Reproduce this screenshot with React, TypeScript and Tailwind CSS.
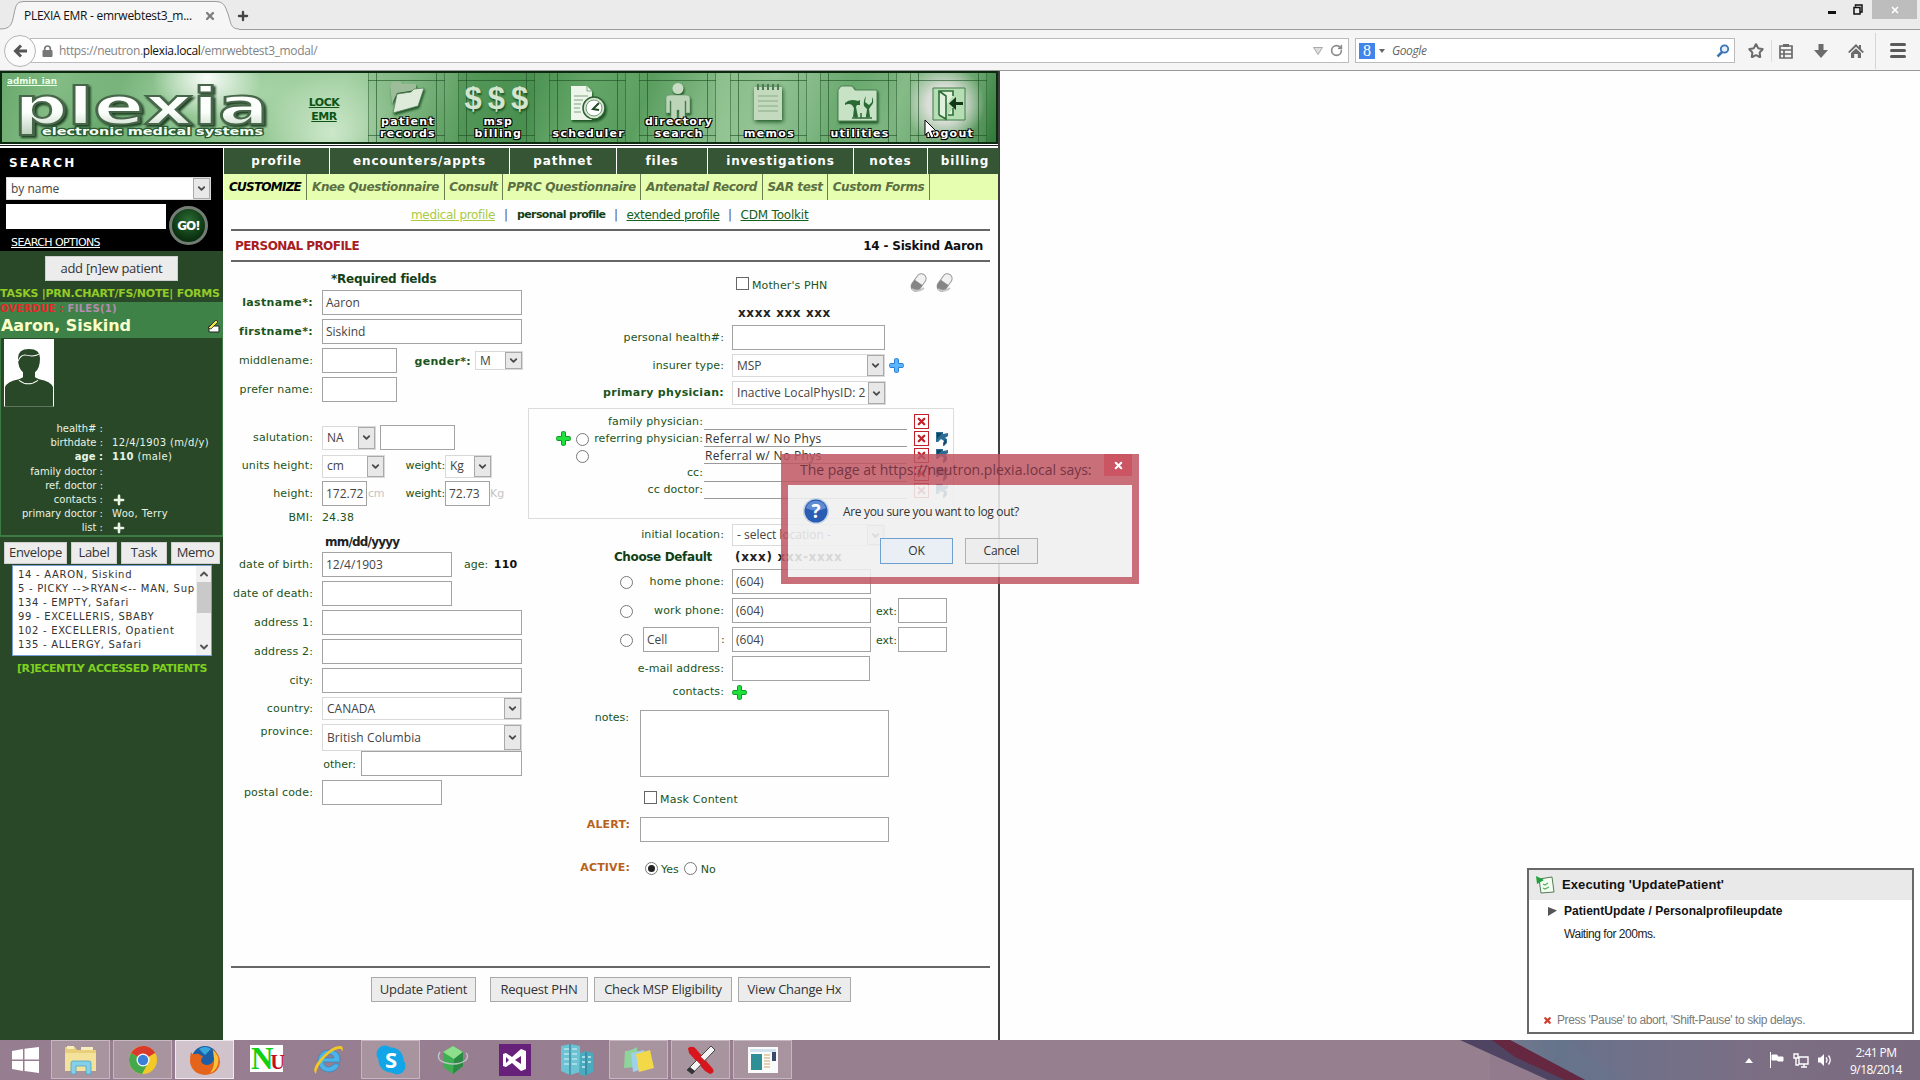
import React from 'react';
import { ChevronDown, ChevronUp, RotateCw, Star, Plus, X } from 'lucide-react';

type P = { className?: string; children?: React.ReactNode };

/* ---------- form primitives ---------- */

const Input = ({ className = '', children }: P) => (
  <div className={`flex h-[25px] shrink-0 items-center border border-[#a3a3a3] bg-white pl-[3px] font-['Open_Sans',sans-serif] text-[12px] text-[#444] ${className}`}>
    {children}
  </div>
);

const Select = ({ className = '', children }: P) => (
  <div className={`flex shrink-0 items-stretch border border-[#d9d9d9] bg-white font-['Open_Sans',sans-serif] text-[12px] text-[#444] ${className}`}>
    <span className="flex min-w-0 flex-1 items-center overflow-hidden whitespace-nowrap pl-1">{children}</span>
    <span className="flex w-[17px] shrink-0 items-center justify-center border border-[#a9a9a9] bg-[#e8e8e8]">
      <ChevronDown size={11} strokeWidth={4} className="text-[#4a4a4a]" />
    </span>
  </div>
);

const Label = ({ className = '', children }: P) => (
  <div className={`shrink-0 whitespace-nowrap text-right text-[11px] leading-4 text-[#1a5420] ${className}`}>{children}</div>
);

const Radio = ({ on = false }: { on?: boolean }) => (
  <span className="flex size-[13px] shrink-0 items-center justify-center rounded-full border border-[#777] bg-white">
    {on && <span className="size-[7px] rounded-full bg-[#222]" />}
  </span>
);

const Cross = ({ fill, stroke }: { fill: string; stroke: string }) => (
  <svg width="15" height="15" viewBox="0 0 15 15" className="shrink-0">
    <path d="M5.500 1.500q0-.8.800-.8h2.400q.8 0 .8.800v4h4q.8 0 .8.800v2.400q0 .8-.8.800h-4v4q0 .8-.8.800H6.300q-.8 0-.8-.8v-4h-4q-.8 0-.8-.8V6.300q0-.8.800-.8h4z" fill={fill} stroke={stroke} strokeWidth="1" />
  </svg>
);

const RedX = () => (
  <span className="flex size-[15px] shrink-0 items-center justify-center border border-[#c4202a] bg-white">
    <X size={11} strokeWidth={5} className="text-[#c4202a]" />
  </span>
);

const BlueArrow = () => (
  <svg width="14" height="15" viewBox="0 0 14 15" className="shrink-0">
    <path d="M1 1h7v2l5-1v3l-3 2 2 1v4l-3 3H8v-3l1-2-3-2-3 3H1z" fill="#2c6d94" />
    <path d="M2 2h5L2 8z" fill="#16435f" />
    <path d="M10 9q1 2-1 4" fill="none" stroke="#16435f" strokeWidth="1.500" />
  </svg>
);

/* ---------- browser chrome ---------- */

const BrowserTabs = () => (
  <div className="relative flex h-[30px] items-start border-b border-[#9a9a9a] bg-[#ebebeb]">
    <svg width="240" height="30" viewBox="0 0 240 30" className="absolute left-0 top-0">
      <path d="M0 29C11 29 12 24 14 14S17 2 25 2H215C224 2 225 6 228 14S230 29 239 29V30H0Z" fill="#f6f6f6" />
      <path d="M0 29C11 29 12 24 14 14S17 1.500 25 1.500H215C224 1.500 225 6 228 14S230 29 239 29" fill="none" stroke="#9c9c9c" />
    </svg>
    <div className="relative flex w-full items-start font-['Open_Sans',sans-serif] text-[12px]">
      <span className="ml-6 mt-[7px] w-[178px] leading-[18px] tracking-[-0.28px] text-[#111]">PLEXIA EMR - emrwebtest3_m...</span>
      <X size={12} strokeWidth={4.500} className="mt-[10px] ml-[2px] text-[#7d7d7d]" />
      <Plus size={14} strokeWidth={4} className="ml-[20px] mt-[9px] text-[#444]" />
      <div className="ml-auto flex items-start">
        <span className="mr-[17px] mt-[11px] h-[3px] w-[8px] bg-[#111]" />
        <svg width="10" height="11" viewBox="0 0 10 11" className="mr-[9px] mt-[4px]">
          <path d="M2.500 2.500V1H9v7H7.500M1 3.500h6V10H1z" fill="none" stroke="#111" strokeWidth="1.500" />
        </svg>
        <span className="mr-[3px] flex h-[19px] w-[45px] items-center justify-center bg-[#bdbdbd]">
          <X size={10} strokeWidth={4} className="text-white" />
        </span>
      </div>
    </div>
  </div>
);

const NavBar = () => (
  <div className="flex h-[41px] items-center border-b border-[#9a9a9a] bg-[#f5f5f5] pt-px font-['Open_Sans',sans-serif] text-[12px]">
    <span className="z-10 ml-1 flex size-[32px] shrink-0 items-center justify-center rounded-full border border-[#b5b5b5] bg-[#fbfbfb]">
      <svg width="15" height="14" viewBox="0 0 15 14">
        <path d="M8 1.500L2.500 7 8 12.500M3 7h11" fill="none" stroke="#555" strokeWidth="3" />
      </svg>
    </span>
    <div className="-ml-[6px] flex h-[25px] w-[1319px] items-center border border-[#bcbcbc] bg-white">
      <svg width="11" height="12" viewBox="0 0 11 12" className="ml-[11px]">
        <path d="M2.700 5.500V3.800a2.800 2.800 0 015.600 0v1.700" fill="none" stroke="#777" strokeWidth="1.700" />
        <rect x="0.500" y="5" width="10" height="7" rx="1" fill="#777" />
      </svg>
      <span className="ml-[6px] whitespace-nowrap pt-px tracking-[-0.35px] text-[#838383]">
        https://neutron.<span className="text-[#111]">plexia.local</span>/emrwebtest3_modal/
      </span>
      <svg width="10" height="8" viewBox="0 0 10 8" className="ml-auto"><path d="M.5.500h9L5 7.500z" fill="#ddd" stroke="#aaa" /></svg>
      <RotateCw size={13} strokeWidth={3} className="ml-[7px] mr-[5px] text-[#8a8a8a]" />
    </div>
    <div className="ml-[6px] flex h-[25px] w-[380px] items-center border border-[#bcbcbc] bg-white">
      <span className="ml-[3px] flex size-4 items-center justify-center bg-[#4285ea] font-['Liberation_Serif',serif] text-[16px] leading-none text-white">8</span>
      <svg width="6" height="4" viewBox="0 0 6 4" className="ml-[4px]"><path d="M0 0h6L3 4z" fill="#666" /></svg>
      <span className="ml-[7px] pt-px italic tracking-[-0.4px] text-[#666]">Google</span>
      <svg width="14" height="14" viewBox="0 0 14 14" className="ml-auto mr-1">
        <circle cx="8.500" cy="5" r="3.700" fill="#e4f0fa" stroke="#3a75b5" strokeWidth="1.800" />
        <path d="M6 8L1.500 12.500" stroke="#3a75b5" strokeWidth="2.500" />
      </svg>
    </div>
    <Star size={16} strokeWidth={3} className="ml-[13px] text-[#6b6b6b]" />
    <span className="ml-[7px] h-[22px] w-px bg-[#ddd]" />
    <svg width="14" height="16" viewBox="0 0 14 16" className="ml-[7px]">
      <path d="M1 3h12v12H1zM1 7h12M1 11h12M5 7v8" fill="none" stroke="#6b6b6b" strokeWidth="1.700" />
      <path d="M4 1h6v3H4z" fill="#6b6b6b" />
    </svg>
    <svg width="14" height="14" viewBox="0 0 14 14" className="ml-[21px]"><path d="M4.500 0h5v6H14l-7 8-7-8h4.500z" fill="#6b6b6b" /></svg>
    <svg width="16" height="14" viewBox="0 0 16 14" className="ml-[20px]">
      <path d="M8 0l3 3V1h2v4l3 3-1.500 1L8 2.800 1.500 9 0 8z" fill="#6b6b6b" />
      <path d="M3 9l5-4.500L13 9v5H9.800v-4H6.200v4H3z" fill="#6b6b6b" />
    </svg>
    <span className="ml-[11px] h-[36px] w-px bg-[#d5d5d5]" />
    <div className="ml-[14px] flex w-[16px] flex-col gap-[3px]">
      <span className="h-[3px] rounded-sm bg-[#5a5a5a]" /><span className="h-[3px] rounded-sm bg-[#5a5a5a]" /><span className="h-[3px] rounded-sm bg-[#5a5a5a]" />
    </div>
  </div>
);

/* ---------- application header ---------- */

const icons = {
  folder: (
    <svg width="42" height="36" viewBox="0 0 42 36" className="mt-[-3px] drop-shadow-[1px_2px_1px_#1d5524]">
      <path d="M4 6l2-4 8-1 3 3h13v6L11 13 6 24z" fill="#9cbc9a" />
      <path d="M11 14l14-2 3-3 10-1-6 18-25 7z" fill="#dfebda" stroke="#55805a" strokeWidth=".8" />
    </svg>
  ),
  dollars: (
    <div className="ml-[5px] whitespace-nowrap font-['Liberation_Sans',sans-serif] text-[31px] font-bold leading-[32px] tracking-[6px] text-[#d3e4cf] [text-shadow:1px_2px_2px_#1d5524]">$$$</div>
  ),
  clock: (
    <svg width="40" height="38" viewBox="0 0 40 38" className="mt-[2px] drop-shadow-[1px_2px_1px_#1d5524]">
      <path d="M4 1h16l5 5v29H4z" fill="#eef5ea" />
      <path d="M20 1v5h5M7 11h14M7 15h9M7 19h7M7 23h6M7 27h7" stroke="#7da381" fill="none" />
      <circle cx="27" cy="23" r="11" fill="#dce9d8" stroke="#2c6032" strokeWidth="1.500" />
      <circle cx="27" cy="23" r="8" fill="#fff" stroke="#6f9a72" />
      <path d="M32 18l-6 6 6 1" fill="none" stroke="#1d4a22" strokeWidth="2" />
    </svg>
  ),
  person: (
    <svg width="34" height="40" viewBox="0 0 34 40" className="drop-shadow-[1px_2px_1px_#1d5524]">
      <circle cx="17" cy="5.500" r="5.500" fill="#c8dcc4" />
      <path d="M9 12h16q4 0 4 3v15h-4V18h-1v22h-6V27h-2v13h-6V18H9v12H5V15q0-3 4-3z" fill="#bcd5b9" stroke="#6c976f" strokeWidth=".6" />
    </svg>
  ),
  memo: (
    <svg width="34" height="38" viewBox="0 0 34 38" className="drop-shadow-[1px_2px_2px_#1d5524]">
      <path d="M3 4h28v33H3z" fill="#c4dabf" />
      <path d="M7 1v6M12 1v6M17 1v6M22 1v6M27 1v6" stroke="#4d7a52" strokeWidth="2" />
      <path d="M7 13h20M7 18h20M7 23h20M7 28h20" stroke="#86ab87" />
    </svg>
  ),
  tools: (
    <svg width="44" height="38" viewBox="0 0 44 38" className="mt-px drop-shadow-[1px_2px_1px_#1d5524]">
      <path d="M2 6l3-4h11l3 4h22v31H2z" fill="#c8e2c5" stroke="#4b8251" />
      <path d="M9 19q5-5 13-2l2-1v5h-3l-1 2 2 10h-5l1-9-2-3q-3-2-7 0zM30 12l-1 6 4 3 3-3v-5q3 5-1 9l-2 3 1 8h-4l1-8-3-3q-1-5 2-10z" fill="#2c6a35" />
      <path d="M16 34h20M20 30v4M25 29v5M31 30v4" stroke="#2c6a35" strokeWidth="1.500" />
    </svg>
  ),
  door: (
    <svg width="34" height="34" viewBox="0 0 34 34" className="mt-[4px]">
      <path d="M1 1h32v32H1z" fill="#b6deb4" stroke="#3f7a45" />
      <path d="M7 28V4h14v5M21 21v7h-5M7 4l7 5v23l-7-4" fill="#dff0dc" stroke="#2e6d36" strokeWidth="1.600" />
      <path d="M31 15h-7v-5l-7 6.500 7 6.500v-5h7z" fill="#14371a" />
    </svg>
  ),
};

const HeaderButton = ({ icon, lines, tint, shift = '' }: { icon: React.ReactNode; lines: string[]; tint: string; shift?: string }) => (
  <div className={`relative flex h-[69px] w-[77px] shrink-0 flex-col items-center ${tint}`}>
    <div className="absolute inset-x-0 top-[7px] bottom-[6px] border-y border-[#1c4d22]/60" />
    <div className="absolute inset-y-0 left-0 right-0 border-x border-[#1c4d22]/45" />
    <div className="absolute inset-y-0 left-[8px] right-[8px] border-x border-[#1c4d22]/60" />
    <div className={`relative mt-[10px] flex h-[34px] items-start justify-center ${shift}`}>{icon}</div>
    <div className="absolute bottom-[2px] left-[3px] right-0 flex flex-col items-center whitespace-nowrap text-[11px] font-bold leading-[12px] tracking-[1.3px] text-white [text-shadow:1px_1px_0_#000,-1px_1px_0_#000,1px_-1px_0_#000,-1px_-1px_0_#000,0_1px_1px_#000]">
      {lines.map((l) => <span key={l}>{l}</span>)}
    </div>
  </div>
);

const AppHeader = () => (
  <div className="flex h-[73px] w-full items-start border-2 border-[#0b2a10] bg-[radial-gradient(ellipse_55px_40px_at_205px_5px,rgba(255,255,255,.95),transparent),radial-gradient(ellipse_70px_60px_at_330px_60px,rgba(215,238,212,.8),transparent),radial-gradient(ellipse_200px_60px_at_250px_20px,rgba(170,214,170,.9),transparent),linear-gradient(110deg,#68a86c_0%,#82bb83_6%,#63a568_12%,#7db97f_18%,#8cc18c_26%,#9ccb9b_34%,#83b985_40%,#5b9d60_47%,#4f9555_53%,#6aab6e_58%,#5b9f60_64%,#8abf8a_70%,#9cc89c_76%,#6ead73_84%,#86bb88_89%,#5d9f63_96%,#2f7837_100%)]">
    <svg width="300" height="69" viewBox="0 0 300 69" className="shrink-0">
      <defs>
        <linearGradient id="logo" x1="0" y1="0" x2="0" y2="1">
          <stop offset="0" stopColor="#ffffff" />
          <stop offset=".6" stopColor="#fbfffb" />
          <stop offset="1" stopColor="#b9cdb9" />
        </linearGradient>
      </defs>
      <g fontFamily="DejaVu Sans" fontWeight="bold">
        <text x="12" y="51" fontSize="52" textLength="255" lengthAdjust="spacingAndGlyphs" fill="url(#logo)" stroke="#47664a" strokeWidth="2" className="drop-shadow-[2px_2px_1px_#1e4023]">plexia</text>
        <text x="40" y="62" fontSize="11" textLength="221" lengthAdjust="spacingAndGlyphs" fill="#f4fff4" stroke="#2b5a31" strokeWidth="2.500" paintOrder="stroke">electronic medical systems</text>
        <text x="5" y="11" fontSize="9.500" textLength="50" lengthAdjust="spacingAndGlyphs" fill="#eaffea" textDecoration="underline">admin_ian</text>
      </g>
    </svg>
    <div className="mt-[23px] ml-[2px] flex w-[40px] flex-col items-center text-[11px] font-bold leading-[14px] tracking-[-0.5px] text-[#0c5416] underline">
      <span>LOCK</span><span>EMR</span>
    </div>
    <div className="ml-[24px] flex gap-[13.4px]">
      <HeaderButton icon={icons.folder} lines={['patient', 'records']} tint="bg-[#5d9f62]/20" />
      <HeaderButton icon={icons.dollars} lines={['msp', 'billing']} tint="bg-[#3d8643]/30" />
      <HeaderButton icon={icons.clock} lines={['scheduler']} tint="bg-[#4b9151]/20" />
      <HeaderButton icon={icons.person} lines={['directory', 'search']} tint="bg-[#5a9c5f]/20" shift="mt-[7px]" />
      <HeaderButton icon={icons.memo} lines={['memos']} tint="bg-[#75ad78]/20" />
      <HeaderButton icon={icons.tools} lines={['utilities']} tint="bg-[#5b9c60]/20" />
      <HeaderButton icon={icons.door} lines={['logout']} tint="bg-[radial-gradient(circle_at_45%_45%,#dcdfd9_30%,rgba(160,195,160,.15)_70%)]" />
    </div>
  </div>
);

/* ---------- sidebar ---------- */

const info: [string, React.ReactNode, string?][] = [
  ['health# :', ''],
  ['birthdate :', '12/4/1903 (m/d/y)'],
  ['age :', <><b>110</b> (male)</>, 'font-bold'],
  ['family doctor :', ''],
  ['ref. doctor :', ''],
  ['contacts :', <Plus size={14} strokeWidth={4.500} />],
  ['primary doctor :', 'Woo, Terry'],
  ['list :', <Plus size={14} strokeWidth={4.500} />],
];

const patients = ['14 - AARON, Siskind', '5 - PICKY -->RYAN<-- MAN, Sup', '134 - EMPTY, Safari', '99 - EXCELLERIS, SBABY', '102 - EXCELLERIS, Opatient', '135 - ALLERGY, Safari'];

const SideButton = ({ className = '', children }: P) => (
  <span className={`flex items-center justify-center border border-[#cfcfcf] bg-[#ececec] font-['Open_Sans',sans-serif] text-[13px] tracking-[-0.28px] text-[#333] ${className}`}>{children}</span>
);

const Sidebar = () => (
  <div className="flex w-[223px] shrink-0 flex-col bg-[#284828]">
    <div className="flex h-[103px] flex-col bg-black px-[6px]">
      <span className="ml-[3px] mt-[7px] text-[12px] font-bold leading-4 tracking-[2.2px] text-white">SEARCH</span>
      <Select className="mt-[6px] h-[23px] w-[205px]">by name</Select>
      <div className="flex h-[34px] items-start">
        <div className="mt-[4px] h-[25px] w-[160px] bg-white" />
        <span className="ml-[3px] mt-[6px] flex size-[39px] shrink-0 items-center justify-center rounded-full border-[3px] border-[#747d74] bg-[radial-gradient(circle_at_50%_35%,#2b6b32,#0a3010_70%)] text-[12px] font-bold tracking-[-1px] text-white">GO!</span>
      </div>
      <span className="ml-[5px] mt-px text-[11px] leading-4 tracking-[-0.58px] text-white underline">SEARCH OPTIONS</span>
    </div>
    <SideButton className="ml-[45px] mt-[5px] h-[25px] w-[133px]">add [n]ew patient</SideButton>
    <div className="mt-[5px] h-4 whitespace-nowrap text-[11px] font-bold leading-4 tracking-[-0.26px] text-[#93cb27]">TASKS |PRN.CHART/FS/NOTE| FORMS</div>
    <div className="h-[36px] bg-[#3e8247]">
      <div className="h-[14px] whitespace-nowrap text-[10px] font-bold leading-[13px] tracking-[0.28px] text-[#e8262a]">OVERDUE : <span className="text-[#b58cb0]">FILES(1)</span></div>
      <div className="flex h-[20px] items-center justify-between pl-px pr-[3px] text-[16px] font-bold leading-5 tracking-[-0.05px] text-[#fbffc8]">
        Aaron, Siskind
        <svg width="13" height="14" viewBox="0 0 13 14">
          <path d="M2 7h10v6H2z" fill="#fff" stroke="#222" />
          <path d="M1 9L9 1l2 2-7 7z" fill="#f0e050" stroke="#222" strokeWidth=".8" />
        </svg>
      </div>
    </div>
    <div className="flex h-[199px] flex-col border-x border-b-2 border-[#3e7a43] pt-px">
      <svg width="50" height="68" viewBox="0 0 50 67" preserveAspectRatio="none" className="ml-[3px]">
        <path d="M0 0h50v67H0z" fill="#fff" />
        <path d="M1 67V48q2-6 14-8l4-2v-5q-5-4-5-14 0-9 11-9t11 9q0 10-5 14v5l4 2q12 2 14 8v19z" fill="#284828" />
        <path d="M14 22q3-7 8-6 8 2 13-1M15 41q9 7 19 0" fill="none" stroke="#fff" />
      </svg>
      <div className="mt-[15px] flex flex-col text-[10px] text-[#e8f4e4]">
        {info.map(([k, v, c], i) => (
          <div key={i} className="flex h-[14.200px] items-center">
            <span className={`w-[102px] whitespace-nowrap text-right ${c ?? ''}`}>{k}</span>
            <span className="ml-[9px] whitespace-nowrap tracking-[0.35px]">{v}</span>
          </div>
        ))}
      </div>
    </div>
    <div className="mt-[5px] flex h-[22px] gap-[4px] pl-[4px] pr-[3px]">
      <SideButton className="w-[63px]">Envelope</SideButton>
      <SideButton className="w-[46px]">Label</SideButton>
      <SideButton className="w-[46px]">Task</SideButton>
      <SideButton className="w-[49px]">Memo</SideButton>
    </div>
    <div className="ml-[12px] mt-px flex h-[91px] w-[200px] border border-[#7a9fd8] bg-white">
      <div className="flex min-w-0 flex-1 flex-col overflow-hidden whitespace-nowrap pl-[5px] pt-[2px] text-[10px] leading-[14px] tracking-[0.7px] text-[#333]">
        {patients.map((p) => <span key={p}>{p}</span>)}
      </div>
      <div className="flex w-[15px] flex-col items-center bg-[#f0f0f0]">
        <ChevronUp size={12} strokeWidth={4} className="my-[2px] text-[#555]" />
        <div className="h-[31px] w-[14px] bg-[#c9c9c9]" />
        <ChevronDown size={12} strokeWidth={4} className="mb-[2px] mt-auto text-[#555]" />
      </div>
    </div>
    <div className="ml-[17px] mt-[5px] whitespace-nowrap text-[11px] font-bold leading-4 tracking-[-0.42px] text-[#7fd01f]">[R]ECENTLY ACCESSED PATIENTS</div>
  </div>
);

/* ---------- navigation ---------- */

const tabs: [string, string][] = [
  ['profile', 'w-[105px]'], ['encounters/appts', 'w-[179px]'], ['pathnet', 'w-[106px]'], ['files', 'w-[90px]'],
  ['investigations', 'w-[145px]'], ['notes', 'w-[73px]'], ['billing', 'w-[71px] pl-[3px]'],
];
const custom: [string, string][] = [
  ['CUSTOMIZE', 'w-[83px] text-black tracking-[-0.76px]'],
  ['Knee Questionnaire', 'w-[138px] text-[#5c6f43] tracking-[-0.38px]'], ['Consult', 'w-[58px] text-[#5c6f43] tracking-[-0.38px]'], ['PPRC Questionnaire', 'w-[138px] text-[#5c6f43] tracking-[-0.38px]'],
  ['Antenatal Record', 'w-[122px] text-[#5c6f43] tracking-[-0.38px]'], ['SAR test', 'w-[65px] text-[#5c6f43] tracking-[-0.38px]'], ['Custom Forms', 'w-[102px] text-[#5c6f43] tracking-[-0.38px]'],
];

const Navigation = () => (
  <>
    <div className="flex h-[26px] gap-px bg-white">
      {tabs.map(([t, w]) => (
        <span key={t} className={`flex shrink-0 items-center justify-center bg-[#355535] text-[12px] font-bold tracking-[0.9px] text-white ${w}`}>{t}</span>
      ))}
    </div>
    <div className="flex h-[26px] bg-[#e5feb0]">
      {custom.map(([t, w]) => (
        <span key={t} className={`flex shrink-0 items-center justify-center whitespace-nowrap border-r border-[#6b7c50] text-[12px] font-bold italic ${w}`}>{t}</span>
      ))}
    </div>
    <div className="ml-[7px] flex h-[31px] w-[759px] items-center border-b-2 border-[#666] pl-[180px] text-[12px] text-[#14601c]">
      <span className="tracking-[-0.34px] text-[#a9cb42] underline">medical profile</span>
      <span className="mx-[9px] text-[#555]">|</span>
      <span className="pt-px text-[11px] font-bold tracking-[-0.62px] text-[#123f16]">personal profile</span>
      <span className="mx-[8.500px] text-[#555]">|</span>
      <span className="tracking-[-0.33px] underline">extended profile</span>
      <span className="mx-[8.500px] text-[#555]">|</span>
      <span className="tracking-[-0.2px] underline">CDM Toolkit</span>
    </div>
    <div className="ml-[7px] flex h-[31px] w-[759px] items-center justify-between border-b-2 border-[#666] pl-[4px] pr-[7px] text-[12px] font-bold">
      <span className="tracking-[-0.56px] text-[#a81d22]">PERSONAL PROFILE</span>
      <span className="tracking-[-0.2px] text-[#111]">14 - Siskind Aaron</span>
    </div>
  </>
);

/* ---------- patient form ---------- */

const L = ({ b = false, children }: { b?: boolean; children: React.ReactNode }) => (
  <Label className={b ? 'mr-[9px] w-[82px] font-bold tracking-[0.35px]' : 'mr-[9px] w-[82px] tracking-[0.15px]'}>{children}</Label>
);
const R = ({ b = false, children }: { b?: boolean; children: React.ReactNode }) => (
  <Label className={b ? 'mr-[8px] w-[196px] font-bold tracking-[0.3px]' : 'mr-[8px] w-[196px] tracking-[0.1px]'}>{children}</Label>
);

const LeftForm = () => (
  <div className="flex w-[297px] shrink-0 flex-col">
    <div className="ml-[100px] mt-[9px] h-[17px] text-[12px] font-bold leading-[17px] tracking-[-0.23px] text-[#123f16]">*Required fields</div>
    <div className="mt-[2px] flex items-center"><L b>lastname*:</L><Input className="w-[200px]">Aaron</Input></div>
    <div className="mt-[4px] flex items-center"><L b>firstname*:</L><Input className="w-[200px]">Siskind</Input></div>
    <div className="mt-[4px] flex items-center">
      <L>middlename:</L><Input className="w-[75px]" />
      <Label className="ml-[15px] mt-[2px] w-[59px] font-bold tracking-[0.3px]">gender*:</Label>
      <Select className="ml-[4px] h-[19px] w-[48px]">M</Select>
    </div>
    <div className="mt-[4px] flex items-center"><L>prefer name:</L><Input className="w-[75px]" /></div>
    <div className="mt-[23px] flex items-center"><L>salutation:</L><Select className="h-[24px] w-[54px]">NA</Select><Input className="ml-[4px] w-[75px]" /></div>
    <div className="mt-[4px] flex h-[24px] items-center">
      <L>units height:</L><Select className="h-[23px] w-[63px]">cm</Select>
      <Label className="ml-[18px] w-[42px] tracking-[-0.2px]">weight:</Label>
      <Select className="h-[23px] w-[47px]">Kg</Select>
    </div>
    <div className="mt-[3px] flex items-center">
      <L>height:</L><Input className="w-[45px] pr-0">172.72</Input>
      <Label className="w-[17px] text-left tracking-[-0.4px] text-[#c4c4c4]!">cm</Label>
      <Label className="ml-[19px] w-[42px] tracking-[-0.2px]">weight:</Label>
      <Input className="w-[45px] pl-[2px]">72.73</Input>
      <Label className="text-[#c4c4c4]!">Kg</Label>
    </div>
    <div className="mt-[4px] flex h-4 items-center"><L>BMI:</L><Label className="tracking-[0.1px]">24.38</Label></div>
    <div className="ml-[94px] mt-[8px] h-4 text-[12px] font-bold leading-4 tracking-[-0.8px] text-[#222]">mm/dd/yyyy</div>
    <div className="mt-[2px] flex items-center">
      <L>date of birth:</L><Input className="w-[130px]">12/4/1903</Input>
      <Label className="ml-[12px]">age: <b className="ml-[2px] tracking-[0.3px] text-[#111]">110</b></Label>
    </div>
    <div className="mt-[4px] flex items-center"><L>date of death:</L><Input className="w-[130px]" /></div>
    <div className="mt-[4px] flex items-center"><L>address 1:</L><Input className="w-[200px]" /></div>
    <div className="mt-[4px] flex items-center"><L>address 2:</L><Input className="w-[200px]" /></div>
    <div className="mt-[4px] flex items-center"><L>city:</L><Input className="w-[200px]" /></div>
    <div className="mt-[4px] flex items-center"><L>country:</L><Select className="h-[23px] w-[200px]">CANADA</Select></div>
    <div className="mt-[4px] flex items-start"><L>province:</L><Select className="h-[27px] w-[200px] tracking-[0.1px]">British Columbia</Select></div>
    <div className="ml-[91px] flex items-center"><Label className="mr-[5px] mt-[3px] w-[34px]">other:</Label><Input className="w-[161px]" /></div>
    <div className="mt-[4px] flex items-center"><L>postal code:</L><Input className="w-[120px]" /></div>
  </div>
);

const physicians: { label: string; value?: string; plus?: boolean; radio?: boolean; arrow?: boolean }[] = [
  { label: 'family physician:' },
  { label: 'referring physician:', value: 'Referral w/ No Phys', plus: true, radio: true, arrow: true },
  { label: '', value: 'Referral w/ No Phys', radio: true, arrow: true },
  { label: 'cc:', arrow: true },
  { label: 'cc doctor:', arrow: true },
];

const Phone = ({ label, ext = false }: { label: string; ext?: boolean }) => (
  <div className="mt-[4px] flex items-center">
    <div className="ml-[92px] flex w-[112px] items-center">
      <span className="mt-[2px]"><Radio /></span><Label className="ml-auto mr-[8px] tracking-[0.15px]">{label}</Label>
    </div>
    <Input className="w-[139px]">(604)</Input>
    {ext && <><Label className="ml-[3px] mt-[2px] w-[24px] pr-px">ext:</Label><Input className="w-[49px]" /></>}
  </div>
);

const Pill = () => (
  <svg width="19" height="21" viewBox="0 0 19 21">
    <g transform="rotate(35 9 10)">
      <rect x="5" y="0.500" width="9.500" height="19" rx="4.700" fill="#f1f1f1" stroke="#999" />
      <path d="M5 10h9.500v5a4.700 4.700 0 01-9.500 0z" fill="#858585" />
    </g>
    <path d="M3 17q6 4 12-1" fill="none" stroke="#c4c4c4" strokeWidth="2" />
  </svg>
);

const RightForm = () => (
  <div className="flex flex-1 flex-col">
    <div className="ml-[208px] mt-[10px] flex h-[21px] items-center">
      <span className="mt-[2px] size-[13px] border border-[#666] bg-white" />
      <Label className="ml-[3px] mt-[6px] tracking-[0.1px]">Mother's PHN</Label>
      <span className="ml-auto mr-[36px] flex gap-[7px]"><Pill /><Pill /></span>
    </div>
    <div className="ml-[210px] mt-[12px] h-4 text-[12px] font-bold leading-4 tracking-[0.6px] text-[#222]">xxxx xxx xxx</div>
    <div className="mt-[4px] flex items-center"><R>personal health#:</R><Input className="w-[153px]" /></div>
    <div className="mt-[4px] flex items-center">
      <R>insurer type:</R><Select className="h-[23px] w-[153px]">MSP</Select>
      <span className="ml-[4px]"><Cross fill="#5cb4ff" stroke="#2a80cf" /></span>
    </div>
    <div className="mt-[4px] flex items-center"><R b>primary physician:</R><Select className="h-[24px] w-[154px] tracking-[0.08px]">Inactive LocalPhysID: 2</Select></div>
    <div className="mt-[3px] flex h-[111px] w-[426px] flex-col border border-[#dcdcdc] pt-[4px]">
      {physicians.map((p, i) => (
        <div key={i} className="flex h-[17.200px] items-center">
          <div className="flex w-[175px] shrink-0 items-center">
            <span className="ml-[27px] w-[15px] shrink-0">{p.plus && <Cross fill="#1fe03c" stroke="#0d9a22" />}</span>
            <span className="ml-[5px] mt-[2px] w-[13px] shrink-0">{p.radio && <Radio />}</span>
            <Label className="ml-auto mr-px tracking-[0.1px]">{p.label}</Label>
          </div>
          <div className="h-[17px] w-[203px] border-b border-[#999] pl-px font-['Open_Sans',sans-serif] text-[12px] leading-[17px] tracking-[0.35px] text-[#333]">{p.value}</div>
          <span className="ml-[7px] flex w-[21px]"><RedX /></span>
          {p.arrow && <BlueArrow />}
        </div>
      ))}
    </div>
    <div className="mt-[5px] flex items-center"><R>initial location:</R><Select className="h-[22px] w-[153px]">- select location -</Select></div>
    <div className="mt-[3px] flex h-4 items-center text-[12px] font-bold">
      <span className="w-[184px] text-right tracking-[-0.36px] text-[#123f16]">Choose Default</span>
      <span className="ml-[23px] tracking-[0.7px] text-[#222]">(xxx) xxx-xxxx</span>
    </div>
    <Phone label="home phone:" />
    <Phone label="work phone:" ext />
    <div className="mt-[4px] flex items-center">
      <div className="ml-[92px] flex w-[112px] items-center">
        <span className="mt-[2px]"><Radio /></span><Input className="ml-[10px] w-[76px]">Cell</Input><Label className="ml-[2px]">:</Label>
      </div>
      <Input className="w-[139px]">(604)</Input>
      <Label className="ml-[3px] mt-[2px] w-[24px] pr-px">ext:</Label><Input className="w-[49px]" />
    </div>
    <div className="mt-[4px] flex items-center"><R>e-mail address:</R><Input className="w-[138px]" /></div>
    <div className="mt-[3px] flex h-4 items-center"><R>contacts:</R><Cross fill="#1fe03c" stroke="#0d9a22" /></div>
    <div className="mt-[10px] flex items-start">
      <Label className="mr-[11px] w-[101px]">notes:</Label>
      <div className="h-[67px] w-[249px] border border-[#a3a3a3] bg-white" />
    </div>
    <div className="ml-[116px] mt-[14px] flex h-[13px] items-center">
      <span className="size-[13px] border border-[#666] bg-white" />
      <Label className="ml-[3px] mt-[5px] tracking-[0.2px]">Mask Content</Label>
    </div>
    <div className="mt-[13px] flex items-start">
      <Label className="mr-[10px] w-[102px] font-bold tracking-[0.15px] text-[#b8621b]!">ALERT:</Label>
      <Input className="w-[249px]" />
    </div>
    <div className="mt-[18px] flex h-4 items-center">
      <Label className="mr-[15px] w-[102px] font-bold tracking-[0.15px] text-[#b8621b]!">ACTIVE:</Label>
      <Radio on /><Label className="ml-[3px] mr-[5px] mt-[4px]">Yes</Label>
      <Radio /><Label className="ml-[4px] mt-[4px]">No</Label>
    </div>
  </div>
);

const FormButton = ({ className = '', children }: P) => (
  <span className={`flex h-[25px] items-center justify-center border border-[#a9a9a9] bg-[#ececec] font-['Open_Sans',sans-serif] text-[13px] tracking-[-0.25px] text-[#333] ${className}`}>{children}</span>
);

/* ---------- overlays ---------- */

const LogoutDialog = () => (
  <div className="absolute left-[781px] top-[454px] flex h-[130px] w-[358px] flex-col font-['Open_Sans',sans-serif] text-[#333]">
    <div className="flex h-[31px] items-start bg-[#bf5663]/85">
      <span className="ml-[19px] mt-[5px] whitespace-nowrap text-[14px] leading-[22px] text-[#743642]">The page at https://neutron.plexia.local says:</span>
      <span className="ml-auto mr-[7px] flex h-[22px] w-[28px] items-center justify-center bg-[#cb5563]"><X size={11} strokeWidth={4.500} className="text-white" /></span>
    </div>
    <div className="flex flex-1 border-x-[7px] border-[#bf5663]/85 bg-[#efefef]/88 bg-clip-padding">
      <svg width="28" height="28" viewBox="0 0 28 28" className="ml-[14px] mt-[12px] shrink-0">
        <circle cx="14" cy="14" r="13" fill="#c5d2e4" />
        <circle cx="14" cy="14" r="11.500" fill="#2a5cb4" />
        <path d="M4 11a10.500 10.500 0 0120 0q-10 5-20 0z" fill="#5f8bd2" />
        <text x="14" y="21" textAnchor="middle" fontSize="19" fontWeight="bold" fontFamily="Open Sans" fill="#fff">?</text>
      </svg>
      <div className="flex flex-1 flex-col">
        <span className="ml-[13px] mt-[18px] whitespace-nowrap text-[12px] leading-[18px] tracking-[-0.33px]">Are you sure you want to log out?</span>
        <div className="ml-[50px] mt-[17px] flex gap-[12px] text-[12px]">
          <span className="flex h-[26px] w-[73px] items-center justify-center border border-[#6fa0cf] bg-[#e9eff6]/80">OK</span>
          <span className="flex h-[26px] w-[73px] items-center justify-center border border-[#b0b0b0] bg-[#ebebeb]/70 tracking-[-0.2px]">Cancel</span>
        </div>
      </div>
    </div>
    <div className="h-[7px] bg-[#bf5663]/85" />
  </div>
);

const MacroPanel = () => (
  <div className="absolute left-[1527px] top-[868px] flex h-[166px] w-[387px] flex-col border-2 border-[#686868] bg-white font-['Liberation_Sans',sans-serif]">
    <div className="flex h-[30px] items-center bg-[#e9e9e9]">
      <svg width="19" height="18" viewBox="0 0 19 18" className="ml-[7px]">
        <path d="M3 3l13-2 2 15-13 1z" fill="#f2fff0" stroke="#567a56" />
        <path d="M0 0l8 4-7 4z" fill="#1fa33a" />
        <path d="M7 8l2 1 3-2M7 12l2 1 4-2" fill="none" stroke="#54b060" strokeWidth="1.300" />
      </svg>
      <span className="ml-[7px] text-[13px] font-bold tracking-[0.11px] text-[#111]">Executing 'UpdatePatient'</span>
    </div>
    <div className="mt-[3px] flex h-4 items-center">
      <svg width="9" height="9" viewBox="0 0 9 9" className="ml-[19px]"><path d="M0 0l9 3.500L0 9z" fill="#555" /></svg>
      <span className="ml-[7px] text-[12px] font-bold tracking-[0.03px] text-[#111]">PatientUpdate / Personalprofileupdate</span>
    </div>
    <span className="ml-[35px] mt-[7px] text-[12px] leading-4 tracking-[-0.45px] text-[#222]">Waiting for 200ms.</span>
    <div className="mb-[4px] mt-auto flex h-4 items-center">
      <X size={9} strokeWidth={6} className="ml-[14px] text-[#d23a2e]" />
      <span className="ml-[5px] text-[12px] tracking-[-0.4px] text-[#7b7b7b]">Press 'Pause' to abort, 'Shift-Pause' to skip delays.</span>
    </div>
  </div>
);

/* ---------- taskbar ---------- */

const taskIcons: { s: 'open' | 'active' | 'none'; i: React.ReactNode }[] = [
  { s: 'open', i: <svg width="34" height="30" viewBox="0 0 34 30"><path d="M1 2h10l2 3h19v21H1z" fill="#e8cf7a" /><path d="M3 1h7v3H3zM17 2h12v3H17z" fill="#f7eec0" /><path d="M1 8h31v18H1z" fill="#f5e29a" /><path d="M7 29V18q0-2 2-2h16q2 0 2 2v11h-5v-8h-10v8z" fill="#86cfe8" stroke="#4aa5c8" strokeWidth=".8" /></svg> },
  { s: 'open', i: <svg width="30" height="30" viewBox="0 0 30 30"><circle cx="15" cy="15" r="14" fill="#f2c927" /><path d="M15 15L2.900 8A14 14 0 0127.100 8z" fill="#da3a2b" /><path d="M15 1a14 14 0 0112.100 7H15z" fill="#da3a2b" /><path d="M2.900 8A14 14 0 0014 29l5-9-4-5z" fill="#45a84a" /><circle cx="15" cy="15" r="6.500" fill="#fff" /><circle cx="15" cy="15" r="5.200" fill="#3c7fd8" /></svg> },
  { s: 'active', i: <svg width="32" height="32" viewBox="0 0 32 32"><circle cx="16" cy="15" r="13" fill="#1c5fa6" /><path d="M10 5q6-4 12 0l-6 6z" fill="#38a8dc" /><path d="M2 8q1 3 4 2 4-1 5 1l3 1-2 4q0 4 5 5 6 0 8-5 1-6-2-11 8 5 8 13-1 12-15 13Q3 30 1 18q0-6 1-10z" fill="#e5641c" /><path d="M24 6q7 6 5 14-2 7-8 9 5-6 4-14z" fill="#f6c23a" /></svg> },
  { s: 'none', i: <span className="mb-[4px] flex h-[27px] w-[33px] items-center bg-white pl-px font-['Liberation_Serif',serif] font-bold leading-none"><span className="text-[31px] tracking-[-3px] text-[#12cf12]">N</span><span className="mt-[8px] text-[20px] text-[#c4101a]">U</span></span> },
  { s: 'none', i: <svg width="34" height="32" viewBox="0 0 34 32"><path d="M17 6a11 11 0 1010.500 14H22q-2 3-5.500 3-4.500 0-5-5H28q1-12-11-12zm-5.500 8q1-4 5.500-4t5 4z" fill="#4db4ea" stroke="#2b87c4" strokeWidth=".7" /><path d="M4 30q-5-4 4-15Q20 1 29 2q3 1 1 6 0-4-4-3-8 2-16 12-6 8-6 13z" fill="#f2c822" /></svg> },
  { s: 'open', i: <svg width="30" height="30" viewBox="0 0 30 30"><circle cx="9" cy="9" r="8.500" fill="#12a5e8" /><circle cx="21" cy="21" r="8.500" fill="#12a5e8" /><circle cx="15" cy="15" r="12.500" fill="#12a5e8" /><text x="15" y="23" textAnchor="middle" fontFamily="Open Sans" fontWeight="bold" fontSize="22" fill="#fff">S</text></svg> },
  { s: 'none', i: <svg width="34" height="32" viewBox="0 0 34 32"><path d="M17 2l10 6v14l-10 8-10-7V8z" fill="#3fae52" /><path d="M17 2l10 6-9 7L7 8z" fill="#8ddf8c" /><path d="M18 15l9-7v14l-10 8z" fill="#2b8a44" /><path d="M4 8q-5 8 6 11 12 3 20-3 3-4 0-7" fill="none" stroke="#b9c4c0" strokeWidth="1.500" /></svg> },
  { s: 'none', i: <svg width="32" height="32" viewBox="0 0 32 32"><path d="M0 0h32v32H0z" fill="#68217a" /><path d="M22 5l5 2v18l-5 2-9-8-6 4-3-1V10l3-1 6 4zM7 13v6l3-3zm15-1l-6 4 6 4z" fill="#fff" fillRule="evenodd" /></svg> },
  { s: 'none', i: <svg width="34" height="32" viewBox="0 0 34 32"><path d="M1 2l9-2 10 2v26l-10 3-9-4z" fill="#6cc3d3" /><path d="M20 9l6-2 7 2v19l-8 4-6-2z" fill="#4aabc0" /><path d="M4 5h5M4 10h5M4 15h5M4 20h5M12 5h5M12 10h5M12 15h5M12 20h5M22 13h3M22 18h3M28 13h3M28 18h3M22 23h3" stroke="#a5dde6" strokeWidth="2" /><path d="M10 0v31M26 8v23" stroke="#2a7388" /></svg> },
  { s: 'open', i: <svg width="34" height="28" viewBox="0 0 34 28"><path d="M3 5q6 0 12-4l1 20-14 1z" fill="#8fd49a" /><path d="M9 7l13-3 2 18-13 4z" fill="#9fd0ee" /><path d="M14 8l14-4 4 18-15 4z" fill="#f3d848" /></svg> },
  { s: 'open', i: <svg width="30" height="30" viewBox="0 0 30 30"><path d="M2 3q5-3 8 1l17 20q2 4-3 5l-5-3L3 8z" fill="#d8151d" /><path d="M25 1l4 4L6 29l-5-4z" fill="#f4f4f4" stroke="#444" strokeWidth="1" /><path d="M11 12l6 6" stroke="#d8151d" strokeWidth="6" /><path d="M1 25l3-3 5 4-3 3z" fill="#333" /></svg> },
  { s: 'open', i: <svg width="30" height="26" viewBox="0 0 30 26"><path d="M0 0h30v26H0z" fill="#fafafa" /><path d="M2 2h26v3H2z" fill="#cfe2ee" /><path d="M3 7h11v16H3z" fill="#2f8f96" /><path d="M16 8h6M16 11h6M16 14h6M16 17h6M16 20h6" stroke="#c9a86a" /><path d="M24 5h4v9h-4z" fill="#3a4a68" /></svg> },
];

const Taskbar = () => (
  <div className="flex h-[40px] w-full items-stretch bg-[linear-gradient(90deg,#977d90_0%,#96808f_78%,#66728a_81%,#737088_87%,#7c6e83_92%,#7a6a80_100%)]">
    <div className="flex w-[51px] items-center pl-[12px]">
      <svg width="27" height="26" viewBox="0 0 27 26"><path d="M0 4l11-2v10.500H0zM12.500 1.700L27 0v12.500H12.500zM0 14h11v10L0 22zM12.500 14H27v12l-14.500-2z" fill="#fff" /></svg>
    </div>
    <div className="flex gap-[3px] pb-px">
      {taskIcons.map(({ s, i }, n) => (
        <span key={n} className={`flex w-[59px] items-center justify-center border pt-px ${s === 'open' ? 'border-[#c6b6c2] bg-[#a8949f]' : s === 'active' ? 'border-[#f0eaee] bg-[#d0c3cb]' : 'border-transparent'}`}>{i}</span>
      ))}
    </div>
    <svg width="240" height="40" viewBox="0 0 240 40" preserveAspectRatio="none" className="ml-[588px] shrink-0">
      <path d="M80 0l88 40H110V0z" fill="#927b8c" />
      <path d="M128 0h60l52 40h-36z" fill="#66758b" opacity=".7" />
      <path d="M80 0h50L205 40h-37z" fill="#4f4462" />
      <path d="M112 0h18L205 40h-20L135 17z" fill="#662841" />
    </svg>
    <div className="ml-auto mr-[11px] flex items-center text-white">
      <svg width="8" height="5" viewBox="0 0 8 5" className="mr-[16px]"><path d="M4 0l4 5H0z" fill="#fff" /></svg>
      <svg width="16" height="16" viewBox="0 0 16 16" className="mr-[8px]"><path d="M1.500 0v16M3 3h5l1 2h5v4H9L8 8H3z" fill="#fff" stroke="#fff" /></svg>
      <svg width="16" height="15" viewBox="0 0 16 15" className="mr-[9px]"><path d="M6 4h9v7H6zM8 14h6M11 11v3M1 1h4v4H1zM3 5v7h3" fill="none" stroke="#fff" strokeWidth="1.400" /></svg>
      <svg width="14" height="14" viewBox="0 0 14 14" className="mr-[14px]"><path d="M0 4.500h2.500L6 1v12L2.500 9.500H0z" fill="#fff" /><path d="M8 4.500q2 2.500 0 5M10.500 2.500q3.500 4.500 0 9" fill="none" stroke="#fff" strokeWidth="1.300" /></svg>
      <div className="mr-[3px] flex w-[60px] flex-col items-center pt-[2px] font-['Open_Sans',sans-serif] text-[12px] leading-[17px] tracking-[-0.55px]">
        <span>2:41 PM</span><span>9/18/2014</span>
      </div>
    </div>
  </div>
);

export default function App() {
  return (
    <div className="relative flex h-[1080px] w-[1920px] flex-col overflow-hidden bg-[#fefefe] font-['DejaVu_Sans',sans-serif]">
      <BrowserTabs />
      <NavBar />
      <div className="flex h-[969px] w-[1000px] flex-col border-r-2 border-[#3f3f3f]">
        <AppHeader />
        <div className="mt-px h-px bg-[#222]" />
        <div className="mt-[2px] flex min-h-0 flex-1">
          <Sidebar />
          <div className="ml-px flex min-w-0 flex-1 flex-col">
            <Navigation />
            <div className="ml-[7px] flex h-[706px] w-[759px] border-b-2 border-[#666]">
              <LeftForm />
              <RightForm />
            </div>
            <div className="ml-[147px] mt-[9px] flex">
              <FormButton className="mr-[14px] w-[105px]">Update Patient</FormButton>
              <FormButton className="mr-[6px] w-[98px]">Request PHN</FormButton>
              <FormButton className="mr-[6px] w-[138px]">Check MSP Eligibility</FormButton>
              <FormButton className="w-[113px]">View Change Hx</FormButton>
            </div>
          </div>
        </div>
      </div>
      <Taskbar />
      <LogoutDialog />
      <MacroPanel />
      <svg width="14" height="20" viewBox="0 0 14 20" className="absolute left-[924px] top-[119px]">
        <path d="M1 1v15l3.500-3 2.500 6 3-1.300-2.500-5.700H12z" fill="#fff" stroke="#000" />
      </svg>
    </div>
  );
}
